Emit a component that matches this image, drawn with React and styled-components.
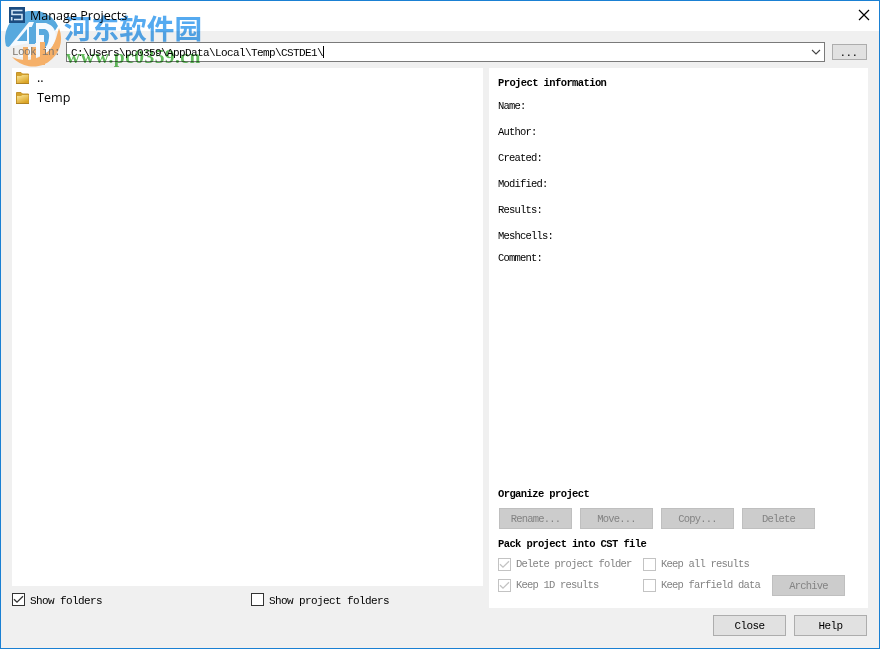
import React from "react";
import styled, { createGlobalStyle, css } from "styled-components";

const Global = createGlobalStyle`
  * { box-sizing: border-box; }
  body { margin: 0; background: #fff; overflow: hidden; }
`;

const mono = css`
  font-family: "Liberation Mono", "Noto Sans CJK SC", monospace;
  white-space: pre;
`;

const Dialog = styled.div`
  position: relative;
  width: 880px;
  height: 649px;
  border: 1px solid #1a80d3;
  background: #f0f0f0;
  display: flex;
  flex-direction: column;
  color: #000;
`;

const TitleBar = styled.header`
  height: 30px;
  flex: none;
  background: #fff;
  display: flex;
  align-items: center;
  padding: 0 9px 2px 8px;
`;

const AppIcon = styled.svg`
  position: relative;
  z-index: 2;
  width: 16px;
  height: 16px;
  margin-right: 5px;
`;

const Title = styled.h1`
  position: relative;
  z-index: 2;
  margin: 0;
  padding-top: 2px;
  flex: 1;
  font: 400 12.6px/16px "Open Sans", sans-serif;
`;

const CloseIcon = styled.svg`
  width: 12px;
  height: 12px;
  display: block;
`;

const PathBar = styled.div`
  ${mono}
  height: 37px;
  flex: none;
  display: flex;
  align-items: flex-start;
  padding: 11px 12px 0 11px;
`;

const PathLabel = styled.label`
  position: relative;
  z-index: 2;
  width: 54px;
  font-size: 11px;
  line-height: 21px;
  letter-spacing: -0.6px;
  color: #80786f;
`;

const Combo = styled.div`
  width: 759px;
  height: 20px;
  border: 1px solid #7a7a7a;
  background: #fff;
  display: flex;
  align-items: center;
  padding: 0 3px 0 4px;
  font-size: 11px;
  letter-spacing: -0.6px;
  line-height: 18px;
`;

const PathText = styled.span`
  padding-top: 1px;
`;

const Caret = styled.span`
  width: 1px;
  height: 12px;
  background: #000;
  margin-right: auto;
`;

const Chevron = styled.svg`
  width: 10px;
  height: 6px;
`;

const Button = styled.button`
  ${mono}
  display: block;
  width: ${(p) => p.$w || 73}px;
  height: ${(p) => p.$h || 21}px;
  padding: 0;
  border: 1px solid ${(p) => (p.disabled ? "#bfbfbf" : "#adadad")};
  background: ${(p) => (p.disabled ? "#cccccc" : "#e1e1e1")};
  color: ${(p) => (p.disabled ? "#838383" : "#000")};
  font-size: ${(p) => (p.disabled ? 10.5 : 11)}px;
  letter-spacing: ${(p) => (p.disabled ? -0.8 : -0.6)}px;
  line-height: 18px;
`;

const BrowseButton = styled(Button)`
  margin: 2px 0 0 7px;
  line-height: 14px;
  padding: 1px 2px 0 0;
`;

const Body = styled.main`
  display: flex;
  gap: 6px;
  height: 540px;
  padding: 0 11px;
`;

const Left = styled.section`
  width: 471px;
`;

const FileList = styled.ul`
  margin: 0;
  height: 518px;
  padding: 0 4px;
  background: #fff;
  list-style: none;
`;

const FileRow = styled.li`
  height: 20px;
  display: flex;
  align-items: center;
  gap: 7px;
  font: 400 12.6px/18px "Open Sans", sans-serif;
`;

const FolderSvg = styled.svg`
  width: 14px;
  height: 14px;
`;

const ListOptions = styled.div`
  display: grid;
  grid-template-columns: 239px auto;
  padding-top: 7px;
`;

const Panel = styled.section`
  ${mono}
  width: 379px;
  height: 540px;
  background: #fff;
  padding: 7px 0 0 9px;
`;

const Heading = styled.h2`
  margin: 0;
  font-size: 10.5px;
  font-weight: 700;
  line-height: 16px;
  letter-spacing: -0.6px;
`;

const Fields = styled.dl`
  margin: 2px 0 0;
  height: 393px;
`;

const Field = styled.dt`
  height: ${(p) => p.$h}px;
  font-size: 10.5px;
  line-height: 26px;
  letter-spacing: -0.8px;
`;

const ButtonRow = styled.div`
  display: flex;
  gap: 8px;
  padding: 6px 0 7px 1px;
`;

const PackGrid = styled.div`
  display: grid;
  grid-template-columns: 145px 129px 73px;
  grid-template-rows: 21px 21px;
  padding-top: 2px;
  align-items: center;
`;

const ArchiveSlot = styled.div`
  grid-column: 3;
  grid-row: 2;
`;

const CheckLabel = styled.label`
  ${mono}
  grid-column: ${(p) => p.$col};
  display: flex;
  align-items: center;
  gap: 5px;
  color: ${(p) => (p.$off ? "#838383" : "#000")};
  font-size: ${(p) => (p.$off ? 10.5 : 11)}px;
  line-height: 13px;
  letter-spacing: ${(p) => (p.$off ? -0.8 : -0.6)}px;
`;

const CheckText = styled.span`
  padding-top: ${(p) => (p.$off ? 0 : 2)}px;
  line-height: 13px;
  margin-bottom: ${(p) => (p.$off ? 0 : -2)}px;
`;

const Box = styled.svg`
  width: 13px;
  height: 13px;
  color: ${(p) => (p.$off ? "#c3c3c3" : "#333")};
`;

const Footer = styled.footer`
  display: flex;
  justify-content: flex-end;
  gap: 8px;
  padding: 7px 12px 0;
`;

const WatermarkLogo = styled.svg`
  position: absolute;
  left: 4px;
  top: 10px;
  width: 57px;
  height: 57px;
  pointer-events: none;
`;

const WatermarkName = styled.div`
  position: absolute;
  left: 63px;
  top: 10px;
  font: 700 27.6px/32px "Noto Sans CJK SC", sans-serif;
  color: #55aaf0;
  mix-blend-mode: multiply;
  white-space: nowrap;
  pointer-events: none;
`;

const WatermarkUrl = styled.div`
  position: absolute;
  left: 65px;
  top: 45px;
  font: 700 19.5px/22px "Liberation Serif", serif;
  letter-spacing: 0.45px;
  color: #62bb5c;
  mix-blend-mode: multiply;
  white-space: nowrap;
  pointer-events: none;
`;

function Check({ children, checked, off, col = "auto" }) {
  return (
    <CheckLabel $off={off} $col={col}>
      <Box $off={off} viewBox="0 0 13 13">
        <rect x=".5" y=".5" width="12" height="12" fill="#fff" stroke="currentColor" />
        {checked && <path d="M2 6.2 5 9.2 11 3.2" fill="none" stroke="currentColor" strokeWidth="1.3" />}
      </Box>
      <CheckText $off={off}>{children}</CheckText>
    </CheckLabel>
  );
}

function Folder() {
  return (
    <FolderSvg viewBox="0 0 14 14">
      <defs>
        <linearGradient id="folder" x1="0" y1="0" x2="0.6" y2="1">
          <stop offset="0" stopColor="#fbe9a0" />
          <stop offset="1" stopColor="#dba425" />
        </linearGradient>
      </defs>
      <path d="M.5 12V1.5H5L6.5 3H12.5V12Z" fill="#d5a32c" stroke="#c4922a" />
      <path d="M1 12V5H5L6.5 4H12.5V12Z" fill="url(#folder)" />
      <path d="M0 12.5H13" stroke="#b08324" />
    </FolderSvg>
  );
}

const fields = [["Name:", 26], ["Author:", 26], ["Created:", 26], ["Modified:", 26], ["Results:", 26], ["Meshcells:", 22], ["Comment:", 26]];

export default function App() {
  return (
    <>
      <Global />
      <Dialog>
        <TitleBar>
          <AppIcon viewBox="0 0 16 16">
            <rect width="16" height="16" fill="#1c4c80" />
            <path d="M13.5 3.5H3V7.5H13V12.5H5M2.7 10V13.5" fill="none" stroke="#cfe4f5" strokeWidth="1.6" />
          </AppIcon>
          <Title>Manage Projects</Title>
          <CloseIcon viewBox="0 0 12 12"><path d="M1 1 11 11M11 1 1 11" stroke="#000" strokeWidth="1.2" /></CloseIcon>
        </TitleBar>
        <PathBar>
          <PathLabel>Look in:</PathLabel>
          <Combo>
            <PathText>{"C:\\Users\\pc0359\\AppData\\Local\\Temp\\CSTDE1\\"}</PathText>
            <Caret />
            <Chevron viewBox="0 0 10 6"><path d="M1 1 5 5 9 1" fill="none" stroke="#444" strokeWidth="1.1" /></Chevron>
          </Combo>
          <BrowseButton $w={35} $h={16}>...</BrowseButton>
        </PathBar>
        <Body>
          <Left>
            <FileList>
              <FileRow><Folder />..</FileRow>
              <FileRow><Folder />Temp</FileRow>
            </FileList>
            <ListOptions>
              <Check checked>Show folders</Check>
              <Check>Show project folders</Check>
            </ListOptions>
          </Left>
          <Panel>
            <Heading>Project information</Heading>
            <Fields>{fields.map(([name, h]) => <Field key={name} $h={h}>{name}</Field>)}</Fields>
            <Heading>Organize project</Heading>
            <ButtonRow>
              {["Rename...", "Move...", "Copy...", "Delete"].map((t) => <Button key={t} disabled>{t}</Button>)}
            </ButtonRow>
            <Heading>Pack project into CST file</Heading>
            <PackGrid>
              <Check off checked col={1}>Delete project folder</Check>
              <Check off col={2}>Keep all results</Check>
              <Check off checked col={1}>Keep 1D results</Check>
              <Check off col={2}>Keep farfield data</Check>
              <ArchiveSlot><Button disabled>Archive</Button></ArchiveSlot>
            </PackGrid>
          </Panel>
        </Body>
        <Footer><Button>Close</Button><Button>Help</Button></Footer>
        <WatermarkLogo viewBox="0 0 57 57">
          <path d="M1 35A28 28 0 0 1 53 15L44 29 34 32H16L3 36Z" fill="#58a9de" />
          <path d="M54 17A28 28 0 0 1 7 46Q17 51 29 48 48 42 52 24Z" fill="#f5b069" />
          <path d="M4 36 24 11H29L25 20V32L13 34Z" fill="#f5faff" />
          <path d="M12 30 22 18V30Z" fill="#58a9de" />
          <path d="M31 12H41Q53 16 50 29 46 42 32 46H14L20 36H31Z" fill="#f5faff" />
          <path d="M34 18H40Q45 20 44 27 43 35 39 37V24H34Z" fill="#58a9de" />
          <path d="M24 16H30V33H24Z" fill="#58a9de" />
          <path d="M18 36H23V52L18 50ZM26 36H31V55H26ZM35 31H40V54H35Z" fill="#f5b069" />
        </WatermarkLogo>
        <WatermarkName>河东软件园</WatermarkName>
        <WatermarkUrl>www.pc0359.cn</WatermarkUrl>
      </Dialog>
    </>
  );
}
